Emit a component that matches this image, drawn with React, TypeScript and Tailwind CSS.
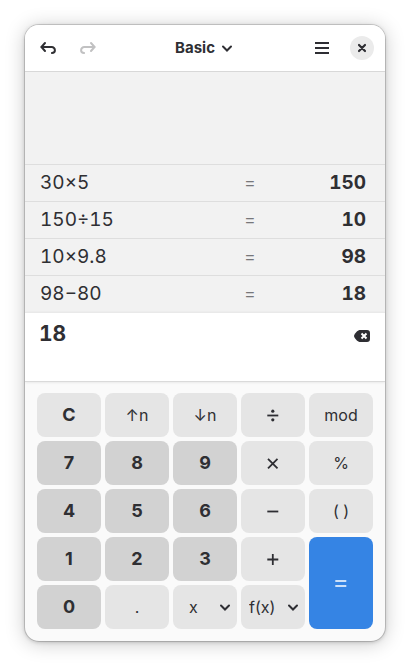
import React, { useState } from "react";

const history = [
  { expression: "30×5", result: "150" },
  { expression: "150÷15", result: "10" },
  { expression: "10×9.8", result: "98" },
  { expression: "98−80", result: "18" },
];

type Tone = "digit" | "operator" | "function";

const tones: Record<Tone, string> = {
  digit: "bg-[#d2d2d2] text-lg font-bold",
  operator: "bg-[#e5e5e5] text-lg font-bold",
  function: "bg-[#e5e5e5] text-base font-normal",
};

function Key({ label, tone, children }: { label: string; tone: Tone; children?: React.ReactNode }) {
  return (
    <button type="button" aria-label={label} className={`flex h-11 items-center justify-center rounded-lg ${tones[tone]}`}>
      {children ?? label}
    </button>
  );
}

function Chevron() {
  return (
    <svg width="16" height="16" viewBox="0 0 16 16" fill="none" stroke="#2e2e33" strokeWidth="2" strokeLinecap="round" aria-hidden="true">
      <path d="M4 6.5 8 10.5 12 6.5" />
    </svg>
  );
}

function Sign({ kind }: { kind: "divide" | "multiply" | "subtract" | "add" }) {
  const paths = {
    divide: "M2.300 8.500h11",
    multiply: "M3 3.800l9.500 9.500M12.500 3.800l-9.500 9.500",
    subtract: "M2.300 8.500h11",
    add: "M2.300 8.500h11M7.800 3v11",
  };
  return (
    <svg width="16" height="16" viewBox="0 0 16 16" fill="none" stroke="#2e2e33" strokeWidth="1.800" aria-hidden="true">
      <path d={paths[kind]} />
      {kind === "divide" && (
        <g fill="#2e2e33" stroke="none">
          <circle cx="7.800" cy="4.200" r="1.600" />
          <circle cx="7.800" cy="12.800" r="1.600" />
        </g>
      )}
    </svg>
  );
}

function MenuKey({ label, text, options }: { label: string; text: string; options: string[] }) {
  return (
    <div className="grid h-11 items-center rounded-lg bg-[#e5e5e5]">
      <select aria-label={label} defaultValue={text} className={`col-start-1 row-start-1 h-full w-full appearance-none text-base ${text === "x" ? "pl-4" : "pl-2"}`}>
        <option>{text}</option>
        {options.map((o) => (
          <option key={o}>{o}</option>
        ))}
      </select>
      <span className="pointer-events-none col-start-1 row-start-1 mr-1 justify-self-end">
        <Chevron />
      </span>
    </div>
  );
}

function BendArrow({ flipped }: { flipped?: boolean }) {
  return (
    <svg width="16" height="16" viewBox="0 0 16 16" fill="none" stroke="currentColor" strokeWidth="2" strokeLinecap="round" className={flipped ? "-scale-x-100" : ""} aria-hidden="true">
      <path d="M5 3 1.400 7 5 11M2 7h9.700a3.200 3.200 0 0 1 3.200 3.200c0 1.600-1.200 2.800-3 2.800" />
    </svg>
  );
}

export default function App() {
  const [entry, setEntry] = useState("18");
  return (
    <div className="bg-white p-[25px] font-['Inter','Noto_Sans',sans-serif] text-[#2f2f33]">
      <main className="overflow-hidden rounded-[14px] bg-[#fafafa] shadow-[0_0_0_1px_rgba(0,0,0,0.14),0_1px_4px_rgba(0,0,0,0.2),0_2px_20px_rgba(0,0,0,0.22)]">
        <header className="grid h-[47px] grid-cols-[1fr_auto_1fr] items-center border-b border-[#d8d8d8] bg-white px-[11px]">
          <div className="flex gap-4">
            <button type="button" aria-label="Undo" className="flex size-6 items-center justify-center">
              <BendArrow />
            </button>
            <button type="button" aria-label="Redo" disabled className="flex size-6 items-center justify-center text-[#c1c1c2]">
              <BendArrow flipped />
            </button>
          </div>
          <div className="grid items-center">
            <select aria-label="Mode" defaultValue="Basic" className="col-start-1 row-start-1 field-sizing-content appearance-none pr-5 text-[15px] leading-5 font-bold">
              <option>Basic</option>
              <option>Advanced</option>
              <option>Financial</option>
              <option>Programming</option>
            </select>
            <span className="pointer-events-none col-start-1 row-start-1 justify-self-end">
              <Chevron />
            </span>
          </div>
          <div className="flex items-center justify-end gap-4">
            <button type="button" aria-label="Main menu" className="flex size-6 items-center justify-center">
              <svg width="16" height="16" viewBox="0 0 16 16" fill="#2e2e33" aria-hidden="true">
                <path d="M1 2h14v2H1zM1 7h14v2H1zM1 12h14v2H1z" />
              </svg>
            </button>
            <button type="button" aria-label="Close" className="flex size-6 items-center justify-center rounded-full bg-[#ebebeb]">
              <svg width="16" height="16" viewBox="0 0 16 16" stroke="#2e2e33" strokeWidth="2.200" strokeLinecap="round" aria-hidden="true">
                <path d="M5 5l6 6M11 5l-6 6" />
              </svg>
            </button>
          </div>
        </header>

        <section aria-label="History" className="bg-[#f2f2f2] pt-[92px] text-[19px] leading-9 tabular-nums">
          {history.map((h) => (
            <div key={h.expression} className="flex border-t border-[#dedede] pr-[19px] pl-[15px]">
              <span className="flex-1">{h.expression}</span>
              <span className="w-10 text-center font-light text-[#77777a]">=</span>
              <span className="w-24 text-right font-bold">{h.result}</span>
            </div>
          ))}
        </section>

        <section className="flex h-[69px] items-start border-t border-[#e9e9e9] bg-white pr-[15px] pl-[14px] shadow-[0_1px_0_#dadada,0_1px_3px_rgba(0,0,0,0.12)]">
          <input aria-label="Expression" value={entry} onChange={(e) => setEntry(e.target.value)} className="h-10 min-w-0 flex-1 text-[21px] font-bold tabular-nums outline-none" />
          <button type="button" aria-label="Backspace" className="mt-[15px]" onClick={() => setEntry(entry.slice(0, -1))}>
            <svg width="16" height="16" viewBox="0 0 16 16" aria-hidden="true">
              <path fill="#2e2e33" d="M5.500 2H13a3 3 0 0 1 3 3v6a3 3 0 0 1-3 3H5.500C4 14 0 10 0 8s4-6 5.500-6z" />
              <path stroke="white" strokeWidth="2" d="M7.500 5.500l5 5M12.500 5.500l-5 5" />
            </svg>
          </button>
        </section>

        <section aria-label="Keypad" className="grid grid-cols-5 gap-1 p-3">
          <Key label="C" tone="operator" />
          <Key label="↑n" tone="function" />
          <Key label="↓n" tone="function" />
          <Key label="Divide" tone="operator"><Sign kind="divide" /></Key>
          <Key label="mod" tone="function" />
          <Key label="7" tone="digit" />
          <Key label="8" tone="digit" />
          <Key label="9" tone="digit" />
          <Key label="Multiply" tone="operator"><Sign kind="multiply" /></Key>
          <Key label="%" tone="function" />
          <Key label="4" tone="digit" />
          <Key label="5" tone="digit" />
          <Key label="6" tone="digit" />
          <Key label="Subtract" tone="operator"><Sign kind="subtract" /></Key>
          <Key label="( )" tone="function" />
          <Key label="1" tone="digit" />
          <Key label="2" tone="digit" />
          <Key label="3" tone="digit" />
          <Key label="Add" tone="operator"><Sign kind="add" /></Key>
          <button type="button" aria-label="Solve" className="row-span-2 flex items-center justify-center rounded-lg bg-[#3584e4]">
            <svg width="16" height="16" viewBox="0 0 16 16" stroke="white" strokeWidth="1.700" aria-hidden="true">
              <path d="M2.300 6h11M2.300 11h11" />
            </svg>
          </button>
          <Key label="0" tone="digit" />
          <Key label="." tone="function" />
          <MenuKey label="Variables" text="x" options={["y", "rand"]} />
          <MenuKey label="Functions" text="f(x)" options={["sin", "cos"]} />
        </section>
      </main>
    </div>
  );
}
